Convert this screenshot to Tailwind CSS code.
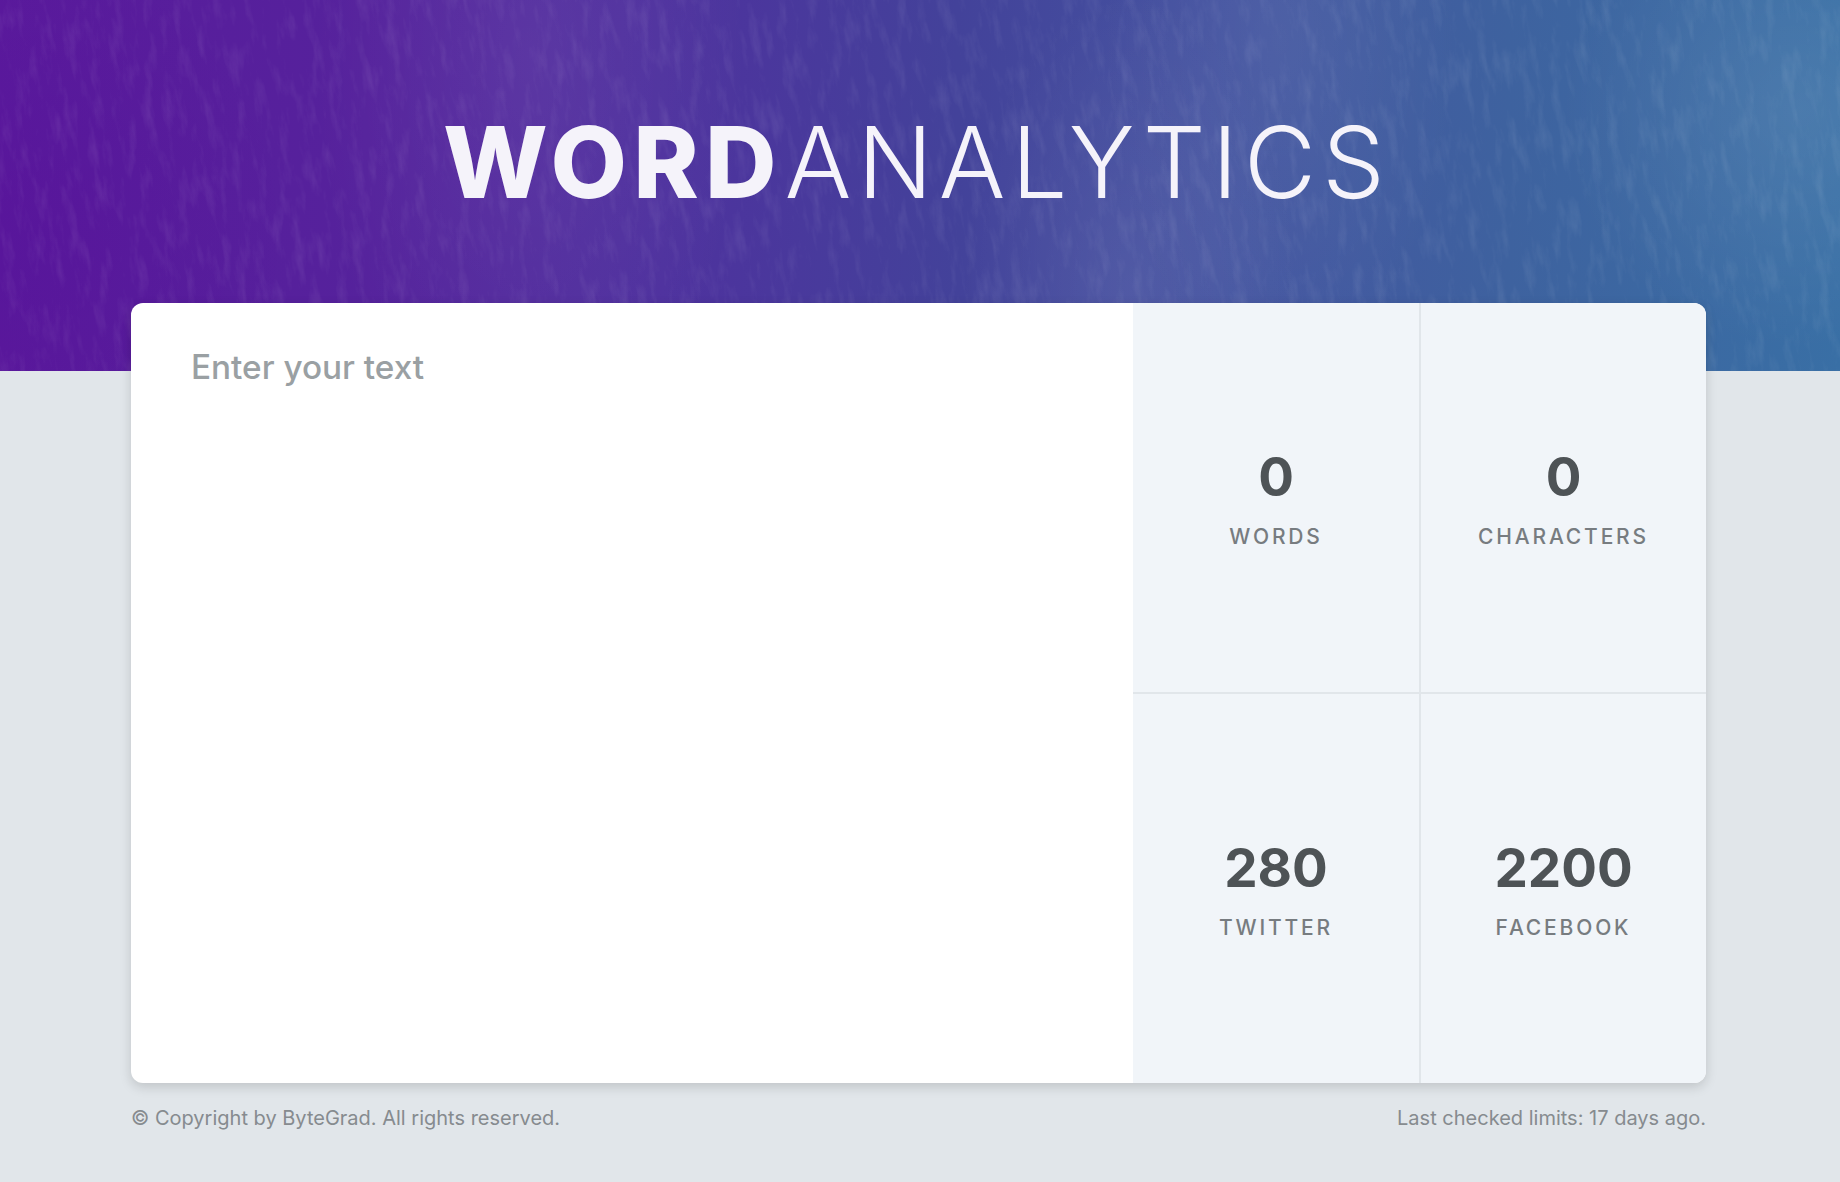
<!DOCTYPE html>
<html lang="en">
<head>
    <meta charset="UTF-8">
    <meta name="viewport" content="width=device-width, initial-scale=1.0">
    <title>Word Analytics</title>
    <script src="https://cdn.jsdelivr.net/npm/@tailwindcss/browser@4"></script>
</head>
<body class="min-h-screen bg-[#e1e6ea] font-[Inter,sans-serif]">
    <!-- Header -->
    <header class="relative h-[371px] overflow-hidden bg-[linear-gradient(90deg,#5a1a9c_0%,#55229c_20%,#4e319e_36%,#43429a_52%,#4453a0_66%,#3e629f_82%,#396fa5_100%)]">
        <div class="absolute inset-0 bg-[radial-gradient(ellipse_220px_420px_at_530px_60px,rgba(255,255,255,0.06),transparent),radial-gradient(ellipse_170px_300px_at_1130px_290px,rgba(255,255,255,0.07),transparent),radial-gradient(ellipse_180px_340px_at_1280px_40px,rgba(255,255,255,0.06),transparent),radial-gradient(ellipse_240px_240px_at_1800px_110px,rgba(255,255,255,0.09),transparent),radial-gradient(ellipse_260px_300px_at_40px_240px,rgba(80,0,150,0.18),transparent)]"></div>
        <svg class="absolute inset-0 h-full w-full" xmlns="http://www.w3.org/2000/svg">
            <filter id="grain" x="0" y="0" width="100%" height="100%">
                <feTurbulence type="fractalNoise" baseFrequency="0.1 0.025" numOctaves="5" seed="7"/>
                <feColorMatrix type="matrix" values="0 0 0 0 1  0 0 0 0 1  0 0 0 0 1  2.4 0 0 0 -1.15"/>
            </filter>
            <rect x="-200" y="-400" width="2400" height="1200" filter="url(#grain)" opacity="0.07" transform="rotate(-7 920 185)"/>
        </svg>
        <h1 class="relative pt-[102px] pr-[6px] text-center text-[99px] leading-[120px] font-light tracking-[0.062em] text-[#f5f3fa]"><span class="mr-[2px] font-extrabold tracking-[0.062em]">WORD</span>ANALYTICS</h1>
    </header>

    <main class="ml-[131px] -mt-[68px] w-[1575px]">
        <!-- Card -->
        <section class="relative flex h-[780px] overflow-hidden rounded-[12px] bg-white shadow-[0_4px_12px_rgba(0,0,0,0.15)]">
            <textarea class="h-full w-[1002px] resize-none px-[60px] pt-[44px] pb-[44px] text-[33.3px] leading-[40px] font-medium text-[#4e5356] outline-none placeholder:text-[#9aa0a3]" placeholder="Enter your text" spellcheck="false"></textarea>

            <div class="grid flex-1 grid-cols-[288px_1fr] grid-rows-[391px_1fr] bg-[#f1f5f9]">
                <div class="flex flex-col items-center justify-center border-r-2 border-b-2 border-[#e1e6ea]">
                    <span class="text-[53px] leading-[64px] font-[680] text-[#4e5356]">0</span>
                    <span class="mt-[14px] text-[21px] leading-[28px] font-medium tracking-[0.135em] text-[#777c80]">WORDS</span>
                </div>
                <div class="flex flex-col items-center justify-center border-b-2 border-[#e1e6ea]">
                    <span class="text-[53px] leading-[64px] font-[680] text-[#4e5356]">0</span>
                    <span class="mt-[14px] text-[21px] leading-[28px] font-medium tracking-[0.135em] text-[#777c80]">CHARACTERS</span>
                </div>
                <div class="flex flex-col items-center justify-center border-r-2 border-[#e1e6ea]">
                    <span class="text-[53px] leading-[64px] font-[680] text-[#4e5356]">280</span>
                    <span class="mt-[14px] text-[21px] leading-[28px] font-medium tracking-[0.135em] text-[#777c80]">TWITTER</span>
                </div>
                <div class="flex flex-col items-center justify-center">
                    <span class="text-[53px] leading-[64px] font-[680] text-[#4e5356]">2200</span>
                    <span class="mt-[14px] text-[21px] leading-[28px] font-medium tracking-[0.135em] text-[#777c80]">FACEBOOK</span>
                </div>
            </div>
        </section>

        <!-- Footer -->
        <footer class="mt-[20px] flex justify-between text-[20px] leading-[30px] text-[#868b8f]">
            <small class="text-[20px]">© Copyright by ByteGrad. All rights reserved.</small>
            <p>Last checked limits: 17 days ago.</p>
        </footer>
    </main>
</body>
</html>
